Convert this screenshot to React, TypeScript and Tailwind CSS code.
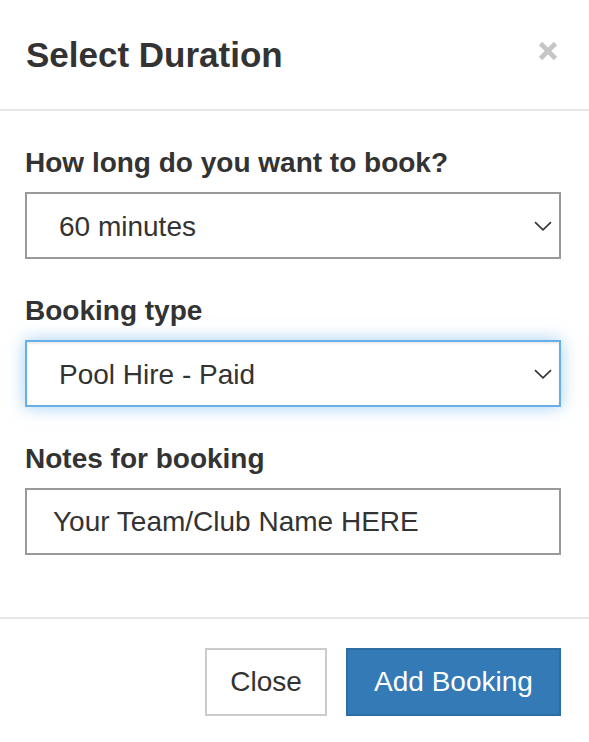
import React, { useState } from 'react';

const fieldBase =
  "block w-full h-[67px] bg-white text-[28px] text-[#333] outline-none appearance-none";

const Chevron: React.FC = () => (
  <svg
    className="absolute right-[9px] top-1/2 -translate-y-1/2 pointer-events-none"
    width="18"
    height="10"
    viewBox="0 0 18 10"
    fill="none"
  >
    <path d="M1 1.2 L9 8.8 L17 1.2" stroke="#333" strokeWidth="1.6" />
  </svg>
);

const App: React.FC = () => {
  const [duration, setDuration] = useState('60');
  const [type, setType] = useState('pool-paid');
  const [notes, setNotes] = useState('Your Team/Club Name HERE');

  return (
    <div className="w-[589px] h-[742px] bg-white font-['Liberation_Sans',Arial,sans-serif] text-[#333] overflow-hidden">
      {/* header */}
      <div className="h-[111px] flex items-center justify-between pl-[26px] pr-[31px] border-b-2 border-[#e5e5e5]">
        <h4 className="text-[35px] font-bold leading-none">Select Duration</h4>
        <button className="w-[20px] h-[20px] -mt-[8px]" aria-label="Close">
          <svg width="20" height="20" viewBox="0 0 20 20">
            <path d="M2.5 2.5 L17.5 17.5 M17.5 2.5 L2.5 17.5" stroke="#c6c6c6" strokeWidth="4.6" />
          </svg>
        </button>
      </div>

      {/* body */}
      <div className="pl-[25px] pr-[28px] pt-[35px] pb-[62px] flex flex-col gap-[35px]">
        <div>
          <label className="block text-[28px] font-bold leading-[34px] mb-[12px]">How long do you want to book?</label>
          <div className="relative">
            <select
              value={duration}
              onChange={(e) => setDuration(e.target.value)}
              className={`${fieldBase} border-2 border-[#999] pl-[32px] pt-[3px]`}
            >
              <option value="30">30 minutes</option>
              <option value="60">60 minutes</option>
              <option value="90">90 minutes</option>
            </select>
            <Chevron />
          </div>
        </div>

        <div>
          <label className="block text-[28px] font-bold leading-[34px] mb-[12px]">Booking type</label>
          <div className="relative">
            <select
              value={type}
              onChange={(e) => setType(e.target.value)}
              className={`${fieldBase} border-2 border-[#66afe9] pl-[32px] pt-[3px] shadow-[inset_0_2px_2px_rgba(0,0,0,0.075),0_0_16px_rgba(102,175,233,0.6)]`}
            >
              <option value="pool-paid">Pool Hire - Paid</option>
              <option value="pool-free">Pool Hire - Free</option>
            </select>
            <Chevron />
          </div>
        </div>

        <div>
          <label className="block text-[28px] font-bold leading-[34px] mb-[12px]">Notes for booking</label>
          <input
            value={notes}
            onChange={(e) => setNotes(e.target.value)}
            className={`${fieldBase} border-2 border-[#999] pl-[26px] pt-[1px]`}
          />
        </div>
      </div>

      {/* footer */}
      <div className="border-t-2 border-[#e5e5e5] pt-[29px] pr-[28px] flex justify-end gap-[19px]">
        <button className="w-[122px] h-[68px] border-2 border-[#ccc] bg-white text-[28px] text-[#333]">Close</button>
        <button className="w-[215px] h-[68px] border-2 border-[#2e6da4] bg-[#337ab7] text-[28px] text-white">Add Booking</button>
      </div>
    </div>
  );
};

export default App;
